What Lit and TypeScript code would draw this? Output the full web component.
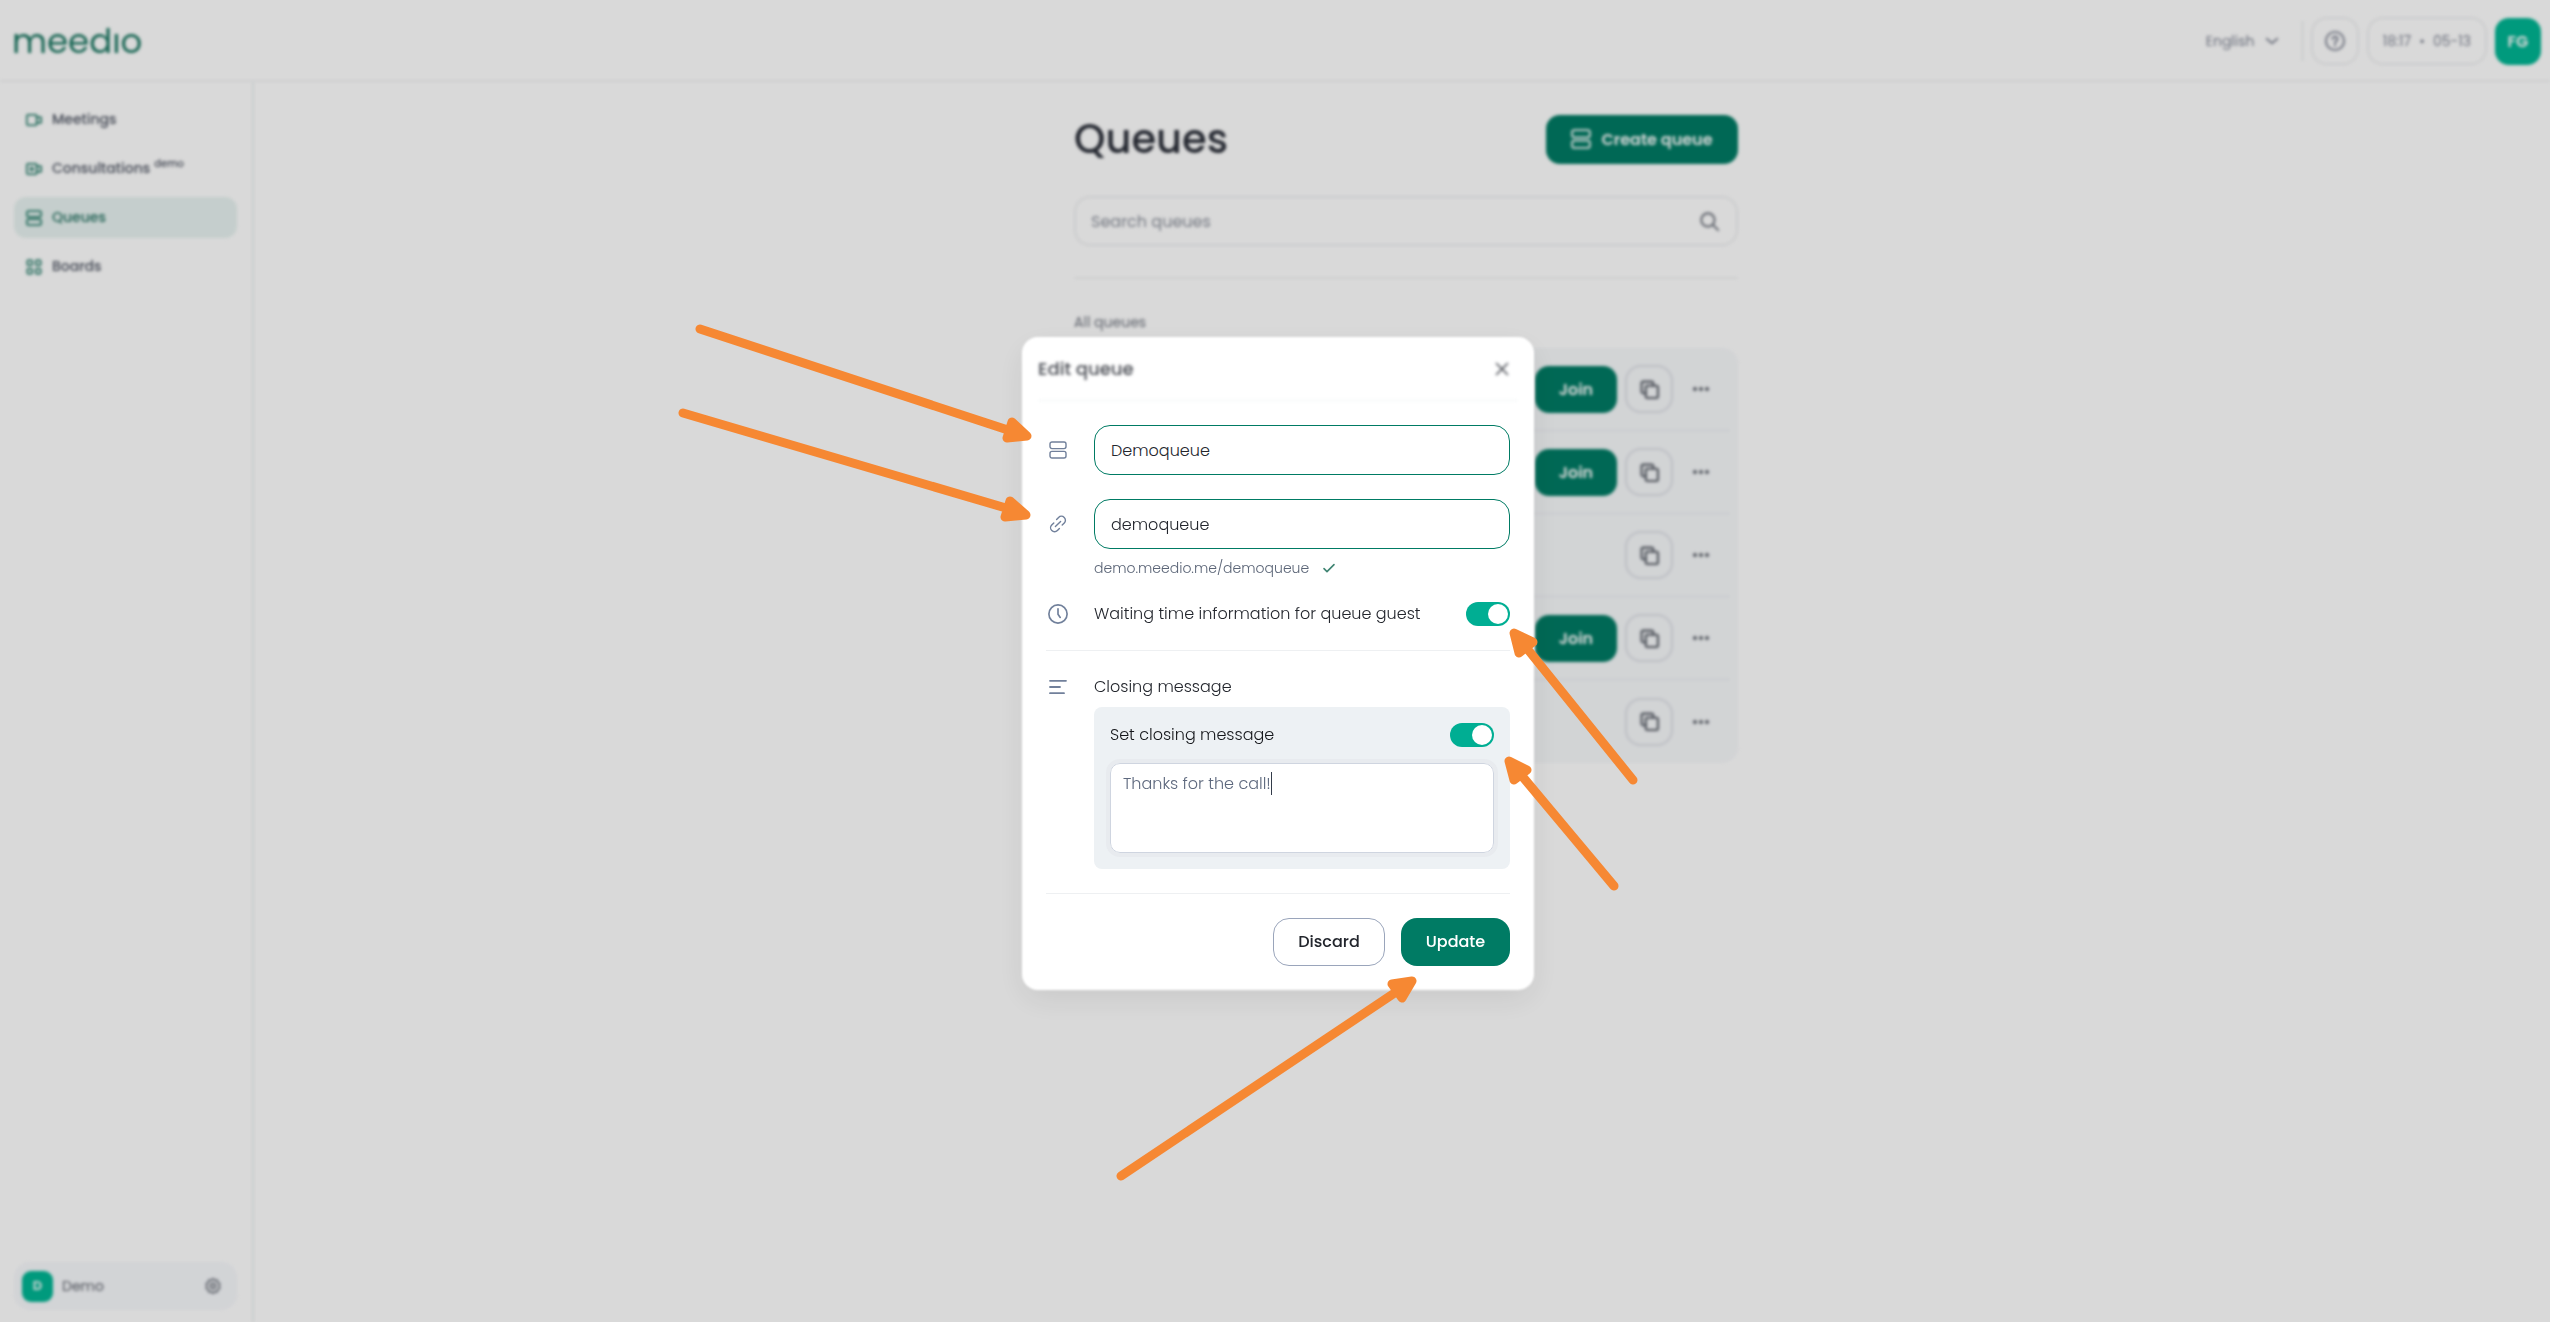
import { LitElement, html, css, svg, nothing } from "lit";
import { customElement, property, state } from "lit/decorators.js";
import { classMap } from "lit/directives/class-map.js";

const shapes = {
  meetings: svg`<rect x="1" y="3" width="11" height="12" rx="1.500"/><path d="M12 6h5v6h-5"/>`,
  consultations: svg`<rect x="1" y="3" width="11" height="12" rx="1.500"/><path d="M12 6h5v6h-5M6.500 6.800v4.400M4.300 9h4.400"/>`,
  queues: svg`<rect x="1" y="1" width="16" height="6.600" rx="2"/><rect x="1" y="10.400" width="16" height="6.600" rx="2"/>`,
  boards: svg`<rect x="1.500" y="1.500" width="5.500" height="5.500" rx="1"/><rect x="11" y="1.500" width="5.500" height="5.500" rx="1"/><rect x="1.500" y="11" width="5.500" height="5.500" rx="1"/><rect x="11" y="11" width="5.500" height="5.500" rx="1"/>`,
  gear: svg`<path d="M9 .8l2 1.800 2.800-.2.600 2.700 2.300 1.500-1 2.400 1 2.400-2.300 1.500-.6 2.700-2.800-.2-2 1.800-2-1.800-2.800.2-.6-2.700L1.300 11.400l1-2.400-1-2.400 2.300-1.500.6-2.700 2.800.2z"/><circle cx="9" cy="9" r="2.800"/>`,
  help: svg`<circle cx="9" cy="9" r="8.200"/><path d="M6.800 7.200a2.200 2.200 0 1 1 3.300 1.900c-.8.500-1.100.9-1.100 1.700M9 12.600v.6"/>`,
  chevron: svg`<path d="M3 6.500 9 11.500l6-5"/>`,
  search: svg`<circle cx="7.500" cy="7.500" r="6.300"/><path d="m12 12 5.200 5.200"/>`,
  copy: svg`<rect x="5.500" y="5.500" width="11.500" height="11.500" rx="1.500"/><path d="M5.500 12.500H3A1.500 1.500 0 0 1 1.500 11V3A1.500 1.500 0 0 1 3 1.500h8A1.500 1.500 0 0 1 12.500 3v2.500"/>`,
  dots: svg`<g fill="currentColor"><circle cx="3" cy="9" r="1.500"/><circle cx="9" cy="9" r="1.500"/><circle cx="15" cy="9" r="1.500"/></g>`,
  close: svg`<path d="M3.500 3.500l11 11M14.500 3.500l-11 11"/>`,
  link: svg`<path d="M6.400 11.600l5.200-5.200M7.600 4.600l2-2.100a3.900 3.900 0 0 1 5.700 5.500l-2.100 2.100M10.400 13.400l-2 2.100A3.900 3.900 0 0 1 2.700 10l2.100-2.100"/>`,
  clock: svg`<circle cx="9" cy="9" r="8.200"/><path d="M9 4.300v5l2 2.800"/>`,
  lines: svg`<path d="M1 2.800h16M1 9h10M1 15.200h14"/>`,
  check: svg`<path d="M1.500 10 6 14.500 16.500 4"/>`,
};
type Shape = keyof typeof shapes;

const icon = (name: Shape, size = 18, stroke = 2) => html`<svg
  class="icon" width=${size} height=${size} viewBox="0 0 18 18" fill="none"
  stroke="currentColor" stroke-width=${stroke} stroke-linecap="round"
  stroke-linejoin="round" aria-hidden="true">${shapes[name]}</svg>`;

const base = css`
  *, *::before, *::after { box-sizing: border-box; }
  button, input, textarea, select { font: inherit; color: inherit; margin: 0; }
  button { cursor: pointer; background: none; border: 0; padding: 0; }
  .icon { display: block; flex: none; overflow: visible; }
`;

@customElement("app-sidebar")
export class AppSidebar extends LitElement {
  static styles = [base, css`
    :host { display: flex; flex-direction: column; justify-content: space-between;
      width: 254px; padding: 17px 15px 12px 14px; border-right: 2px solid #edf1f1; }
    nav { display: flex; flex-direction: column; gap: 8px; }
    .item { display: flex; align-items: center; gap: 10px; height: 41px; padding: 0 12px;
      border-radius: 12px; color: #4e5462; font-size: 14px; font-weight: 500; text-decoration: none; }
    .item .icon { color: #0d6e59; }
    .item.current { background: #e8f3f1; color: #237060; }
    .tag { font-size: 10px; align-self: flex-start; margin: 8px 0 0 -6px; }
    .account { display: flex; align-items: center; gap: 9px; height: 48px; padding: 0 16px 0 8px;
      border-radius: 16px; background: #f7f9fc; color: #5f636c; font-size: 14px; }
    .avatar { display: grid; place-items: center; width: 31px; height: 31px; border-radius: 9px;
      background: #00b593; color: #fff; font-size: 13px; font-weight: 600; }
    .account button { margin-left: auto; color: #555a64; }
  `];
  private items: { label: string; icon: Shape; tag?: string; current?: boolean }[] = [
    { label: "Meetings", icon: "meetings" },
    { label: "Consultations", icon: "consultations", tag: "demo" },
    { label: "Queues", icon: "queues", current: true },
    { label: "Boards", icon: "boards" },
  ];
  render() {
    return html`
      <nav>
        ${this.items.map((i) => html`
          <a href="#${i.label.toLowerCase()}" class=${classMap({ item: true, current: !!i.current })}>
            ${icon(i.icon, 16, 1.7)}<span>${i.label}</span>${i.tag ? html`<span class="tag">${i.tag}</span>` : nothing}
          </a>`)}
      </nav>
      <div class="account">
        <span class="avatar">D</span><span>Demo</span>
        <button aria-label="Settings">${icon("gear", 16, 1.5)}</button>
      </div>`;
  }
}

@customElement("app-header")
export class AppHeader extends LitElement {
  static styles = [base, css`
    :host { display: flex; align-items: center; justify-content: space-between; height: 82px;
      padding: 2px 9px 0 12px; border-bottom: 2px solid #f3f4f5; color: #818695; font-size: 14px; }
    .logo { font-size: 34px; line-height: 48px; color: #17755f; text-decoration: none; }
    .tools { display: flex; align-items: center; gap: 8px; }
    .language { display: flex; align-items: center; padding-right: 22px; height: 40px; border-right: 1px solid #e2e8e8; }
    select { appearance: none; border: 0; background: none; padding: 0; width: 58px; }
    .box { display: grid; grid-auto-flow: column; place-items: center; gap: 8px; height: 48px; min-width: 48px;
      border: 2px solid #eff0f2; border-radius: 16px; }
    .time { padding: 0 14px; }
    .avatar { display: grid; place-items: center; width: 46px; height: 47px; border-radius: 14px;
      background: #00b593; color: #fff; font-weight: 600; font-size: 16px; }
  `];
  render() {
    return html`
      <a class="logo" href="#home">meedıo</a>
      <div class="tools">
        <label class="language">
          <select aria-label="Language"><option>English</option></select>
          ${icon("chevron", 16)}
        </label>
        <button class="box" aria-label="Help">${icon("help", 20, 1.7)}</button>
        <div class="box time"><span>18:17</span><span>•</span><span>05-13</span></div>
        <button class="avatar">FG</button>
      </div>`;
  }
}

@customElement("queue-list")
export class QueueList extends LitElement {
  static styles = [base, css`
    :host { display: flex; flex-direction: column; width: 664px; max-width: 100%; }
    .top { display: flex; align-items: center; justify-content: space-between; height: 50px; }
    h1 { margin: 0; font-size: 40px; line-height: 50px; font-weight: 500; color: #2c303a; }
    .create { display: flex; align-items: center; justify-content: center; gap: 10px; width: 192px; height: 49px;
      border-radius: 14px; background: #007b64; color: #fff; font-weight: 600; font-size: 16px; }
    .search { display: flex; align-items: center; height: 50px; margin-top: 32px; padding: 0 17px 0 15px;
      border: 2px solid #eff0f2; border-radius: 16px; color: #6c717b; }
    .search input { flex: 1; min-width: 0; border: 0; outline: 0; background: none; padding: 0; font-size: 16px; }
    .search input::placeholder { color: #8b909b; opacity: 1; }
    hr { width: 100%; height: 2px; border: 0; margin: 31px 0 0; background: #f4f5f6; }
    h2 { margin: 33px 0 15px; font-size: 14px; line-height: 21px; font-weight: 400; color: #717680; }
    ul { list-style: none; margin: 0; padding: 0 8px; border-radius: 16px; background: #f7f9fb; }
    li { display: flex; align-items: center; justify-content: flex-end; gap: 8px; height: 83px; padding-right: 9px;
      border-bottom: 1px solid #e9ebee; color: #595e67; }
    li:last-child { border-bottom: 0; }
    .join { width: 82px; height: 47px; border-radius: 14px; background: #007b64; color: #fff; font-weight: 600; font-size: 16px; }
    .copy { display: grid; place-items: center; width: 48px; height: 48px; border: 2px solid #dfe1e6; border-radius: 16px; }
    .more { display: grid; place-items: center; width: 40px; height: 48px; }
  `];
  @state() private rows = [true, true, false, true, false];
  render() {
    return html`
      <div class="top"><h1>Queues</h1><button class="create">${icon("queues", 20, 1.6)}Create queue</button></div>
      <label class="search"><input type="search" placeholder="Search queues" aria-label="Search queues" />${icon("search", 19, 1.8)}</label>
      <hr />
      <h2>All queues</h2>
      <ul>
        ${this.rows.map((open) => html`<li>
          ${open ? html`<button class="join">Join</button>` : nothing}
          <button class="copy" aria-label="Copy link">${icon("copy", 19)}</button>
          <button class="more" aria-label="More">${icon("dots", 18, 1)}</button>
        </li>`)}
      </ul>`;
  }
}

@customElement("edit-queue-dialog")
export class EditQueueDialog extends LitElement {
  static styles = [base, css`
    :host { display: block; position: relative; isolation: isolate; width: 512px; color: #23262d; font-size: 16px; font-weight: 300; line-height: 24px; }
    :host::before { content: ""; position: absolute; inset: 0; z-index: -1; border-radius: 16px; background: #fff;
      box-shadow: 0 10px 32px rgba(0, 0, 0, 0.08); filter: blur(1px); }
    header { display: flex; align-items: center; justify-content: space-between; height: 64px; margin: 0 16px;
      padding-right: 7px; border-bottom: 1px solid #eff4f5; filter: blur(1px) blur(1px); color: #484b52; }
    h2 { margin: 0; font-size: 18px; font-weight: 500; }
    form { display: flex; flex-direction: column; padding: 24px; }
    .row { display: grid; grid-template-columns: 24px minmax(0, 1fr); column-gap: 24px; align-items: center; color: #23262d; }
    .row > .icon { justify-self: center; color: #71809b; }
    .field { width: 100%; height: 50px; padding: 0 16px; border: 1px solid #007b64; border-radius: 16px; background: #fff; outline: 0; }
    .row + .row { margin-top: 24px; }
    .hint { display: flex; align-items: center; gap: 14px; margin: 7px 0 0 48px; color: #5b6577; font-size: 14px; }
    .hint .icon { color: #3f8472; }
    .hint + .row { margin-top: 19px; }
    .setting { display: flex; align-items: center; justify-content: space-between; height: 30px; }
    .switch { appearance: none; width: 44px; height: 24px; border-radius: 12px; background: #c5cad3; display: flex; padding: 2px; }
    .switch::before { content: ""; width: 20px; height: 20px; border-radius: 10px; background: #fff; }
    .switch:checked { background: #00ae93; justify-content: flex-end; }
    hr { width: 100%; height: 1px; border: 0; margin: 21px 0 24px; background: #eef0f2; }
    .panel { margin-left: 48px; padding: 12px 16px 16px; border-radius: 8px; background: #edf1f4; color: #15171b; }
    .panel .setting { height: 32px; }
    .message { position: relative; display: flex; margin-top: 12px; }
    textarea { width: 100%; height: 90px; padding: 8px 12px; border: 1px solid #cfd5e0; border-radius: 10px; resize: none;
      outline: 4px solid #e8ebef; background: #fff; color: #5e697e; }
    .caret { position: absolute; left: 161px; top: 9px; width: 1px; height: 23px; background: #333c4a; }
    .closing { margin-bottom: 8px; }
    .actions { display: flex; justify-content: flex-end; gap: 16px; }
    .actions button { width: 112px; height: 48px; border-radius: 16px; font-weight: 500; }
    .discard { border: 1px solid #9aa5bb; background: #fff; }
    .actions .update { width: 109px; background: #007b64; color: #fff; }
    .last { margin: 24px 0; }
    .arrows { position: absolute; inset: 0; width: 100%; height: 100%; overflow: visible; pointer-events: none; }
  `];
  @property() name = "Demoqueue";
  @property() slug = "demoqueue";
  private arrows = [
    "M700 329 1017 433M1012 422 1027 436 1007 438Z",
    "M683 413 1016 511M1010 501 1026 515 1005 517Z",
    "M1633 780 1521 641M1514 633 1533 642 1519 653Z",
    "M1614 886 1517 770M1509 761 1527 770 1514 780Z",
    "M1121 1176 1402 988M1412 981 1392 984 1402 998Z",
  ];
  render() {
    return html`
      <header><h2>Edit queue</h2><button aria-label="Close">${icon("close", 18, 1.6)}</button></header>
      <form @submit=${(e: Event) => e.preventDefault()}>
        <div class="row">${icon("queues", 18, 1.4)}<input class="field" aria-label="Queue name" .value=${this.name} /></div>
        <div class="row">${icon("link", 18, 1.4)}<input class="field" aria-label="Queue link" .value=${this.slug} /></div>
        <div class="hint"><span>demo.meedio.me/${this.slug}</span>${icon("check", 12, 2.4)}</div>
        <div class="row">${icon("clock", 20, 1.5)}
          <div class="setting"><label for="waiting">Waiting time information for queue guest</label>
            <input id="waiting" class="switch" type="checkbox" role="switch" checked /></div></div>
        <hr />
        <div class="row closing">${icon("lines", 18, 1.8)}<span>Closing message</span></div>
        <div class="panel">
          <div class="setting"><label for="closing">Set closing message</label>
            <input id="closing" class="switch" type="checkbox" role="switch" checked /></div>
          <div class="message"><textarea aria-label="Closing message" .value=${"Thanks for the call!"}></textarea><span class="caret"></span></div>
        </div>
        <hr class="last" />
        <div class="actions"><button type="button" class="discard">Discard</button><button class="update">Update</button></div>
      </form>
      <svg class="arrows" viewBox="1022 337 512 653" preserveAspectRatio="xMinYMin" aria-hidden="true">
        ${this.arrows.map((d) => svg`<path d=${d} fill="#f68833" stroke="#f68833" stroke-width="9" stroke-linecap="round" stroke-linejoin="round"/>`)}
      </svg>`;
  }
}

@customElement("app-root")
export class AppRoot extends LitElement {
  static styles = [base, css`
    :host { display: grid; height: 100vh; overflow: hidden; background: #fff;
      font-family: Poppins, Inter, "Liberation Sans", sans-serif; }
    .page, .overlay { grid-area: 1 / 1; min-width: 0; min-height: 0; }
    .page { display: flex; flex-direction: column; filter: blur(1px) blur(1px); }
    .body { display: flex; flex: 1; min-height: 0; }
    main { flex: 1; display: flex; justify-content: center; padding: 32px 0 0 8px; }
    .overlay { z-index: 1; display: grid; place-content: center; padding: 5px 0 0 6px; background: rgba(0, 0, 0, 0.15); }
  `];
  render() {
    return html`
      <div class="page">
        <app-header></app-header>
        <div class="body"><app-sidebar></app-sidebar><main><queue-list></queue-list></main></div>
      </div>
      <div class="overlay"><edit-queue-dialog></edit-queue-dialog></div>`;
  }
}
